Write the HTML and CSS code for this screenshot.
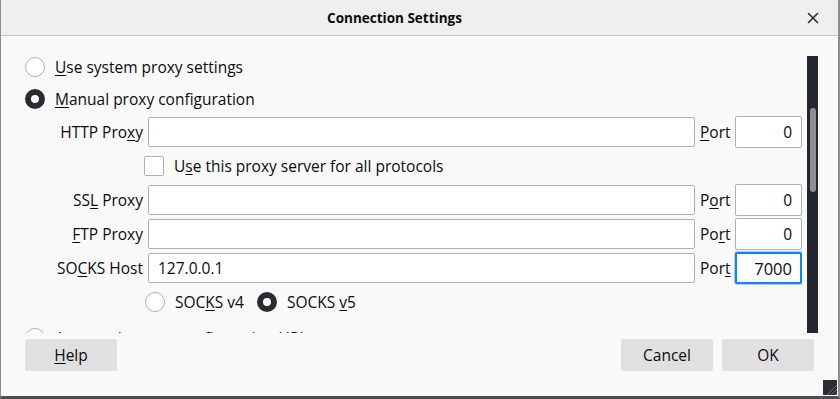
FILE: index.html
```html
<!DOCTYPE html>
<html>
<head>
<meta charset="utf-8">
<link rel="stylesheet" href="styles.css">
</head>
<body>
<div class="window">
  <div class="titlebar">
    <span></span>
    <span class="title">Connection Settings</span>
    <span class="close" aria-label="Close">
      <svg width="12" height="12" viewBox="0 0 12 12"><path d="M1.5 1.5 L10.5 10.5 M10.5 1.5 L1.5 10.5" stroke="#2b2b2e" stroke-width="1.6" fill="none" stroke-linecap="round"/></svg>
    </span>
  </div>
  <div class="body">
    <div class="scroller">
      <div class="content">
        <div class="radio-row"><span class="radio"></span><span><u>U</u>se system proxy settings</span></div>
        <div class="radio-row"><span class="radio checked"></span><span><u>M</u>anual proxy configuration</span></div>
        <div class="grid">
          <span class="lbl">HTTP Pro<u>x</u>y</span><span class="input"></span><span class="plbl"><u>P</u>ort</span><span class="port">0</span>
          <span></span><div class="check-row"><span class="checkbox"></span><span>U<u>s</u>e this proxy server for all protocols</span></div>
          <span class="lbl">SS<u>L</u> Proxy</span><span class="input"></span><span class="plbl">P<u>o</u>rt</span><span class="port">0</span>
          <span class="lbl"><u>F</u>TP Proxy</span><span class="input"></span><span class="plbl">Po<u>r</u>t</span><span class="port">0</span>
          <span class="lbl">SO<u>C</u>KS Host</span><span class="input">127.0.0.1</span><span class="plbl">Por<u>t</u></span><span class="port focused">7000</span>
          <span></span><div class="socks-row"><span class="radio"></span><span>SOC<u>K</u>S v4</span><span class="radio checked v5"></span><span>SOCKS <u>v</u>5</span></div>
        </div>
        <div class="radio-row auto"><span class="radio"></span><span>Automatic proxy configuration URL</span></div>
      </div>
      <div class="scrollbar"><div class="thumb"></div></div>
    </div>
    <div class="buttons">
      <span class="btn help"><u>H</u>elp</span>
      <span class="spacer"></span>
      <span class="btn">Cancel</span>
      <span class="btn">OK</span>
    </div>
  </div>
  <svg class="grip" width="14" height="15" viewBox="0 0 14 15">
    <rect width="14" height="15" fill="#2a2c31"/>
    <path d="M4 15 L14 5 M8 15 L14 9 M12 15 L14 13" stroke="#6a6c70" stroke-width="1"/>
  </svg>
</div>
</body>
</html>
```
FILE: styles.css
```css
html, body {
  margin: 0;
  padding: 0;
}
body {
  width: 840px;
  height: 399px;
  overflow: hidden;
  background: #f9f9fa;
  font-family: "Open Sans", "Noto Sans", sans-serif;
  font-size: 15.5px;
  color: #0c0c0d;
}
u {
  text-decoration: underline;
  text-underline-offset: 2px;
  text-decoration-thickness: 1px;
}
.window {
  box-sizing: border-box;
  width: 840px;
  height: 399px;
  background: #f9f9fa;
  border-left: 1px solid #8c8c8c;
  border-right: 2px solid #8c8c8c;
  border-bottom: 3px solid #4e4e4e;
  display: flex;
  flex-direction: column;
  position: relative;
}
.titlebar {
  flex: none;
  height: 35px;
  background: #efefef;
  border-bottom: 1px solid #c4c4c4;
  display: grid;
  grid-template-columns: 1fr auto 1fr;
  align-items: center;
}
.title {
  font-weight: 700;
  font-size: 13.5px;
  margin-right: 50px;
}
.close {
  justify-self: end;
  margin-right: 19px;
  display: flex;
  width: 12px;
  height: 12px;
}
.body {
  flex: 1;
  display: flex;
  flex-direction: column;
  padding: 15px 24px 0 23px;
}
.scroller {
  display: flex;
  height: 282px;
  flex: none;
}
.content {
  width: 778px;
  height: 282px;
  overflow: hidden;
  flex: none;
}
.radio-row {
  height: 32px;
  display: flex;
  align-items: center;
  gap: 10px;
  padding-left: 1px;
}
.radio {
  box-sizing: border-box;
  width: 20px;
  height: 20px;
  border-radius: 50%;
  border: 1px solid #b1b1b3;
  background: #fff;
  flex: none;
}
.radio.checked {
  border: 6px solid #2a2b30;
  background: #fff;
}
.grid {
  margin-top: 1px;
  display: grid;
  grid-template-columns: 119px 547px 30px 67px;
  grid-auto-rows: 32px;
  column-gap: 5px;
  row-gap: 2px;
  align-items: center;
}
.lbl {
  text-align: right;
  white-space: nowrap;
}
.input {
  box-sizing: border-box;
  height: 30px;
  background: #fff;
  border: 1px solid #b1b1b3;
  border-radius: 2px;
  padding: 0 9px;
  display: flex;
  align-items: center;
}
.plbl {
  white-space: nowrap;
}
.port {
  box-sizing: border-box;
  height: 32px;
  background: #fff;
  border: 1px solid #b1b1b3;
  border-radius: 2px;
  padding: 0 9px;
  display: flex;
  align-items: center;
  justify-content: flex-end;
}
.port.focused {
  border: 2px solid #0a84ff;
  box-shadow: 0 0 0 1px #a8d1ff;
  padding-right: 8px;
  font-size: 16.5px;
}
.check-row {
  grid-column: 2 / 5;
  display: flex;
  align-items: center;
  gap: 10px;
  margin-left: -4px;
}
.checkbox {
  box-sizing: border-box;
  width: 20px;
  height: 20px;
  border: 1px solid #b1b1b3;
  border-radius: 2px;
  background: #fff;
  flex: none;
}
.socks-row {
  grid-column: 2 / 5;
  display: flex;
  align-items: center;
  gap: 10px;
  margin-left: -3px;
}
.socks-row .v5 {
  margin-left: 3px;
}
.radio-row.auto {
  margin-top: 4px;
}
.scrollbar {
  margin-left: 5px;
  margin-top: 5px;
  width: 11px;
  height: 277px;
  background: #23262e;
  display: flex;
  justify-content: center;
  flex: none;
}
.thumb {
  margin-top: 52px;
  width: 6px;
  height: 84px;
  border-radius: 3px;
  background: #8f8f91;
}
.buttons {
  margin-top: 6px;
  display: flex;
  gap: 9px;
  padding-left: 1px;
}
.spacer {
  flex: 1;
}
.btn {
  width: 92px;
  height: 32px;
  border-radius: 2px;
  background: #e0e0e1;
  display: flex;
  align-items: center;
  justify-content: center;
}
.grip {
  position: absolute;
  right: 1px;
  bottom: 1px;
}
```
